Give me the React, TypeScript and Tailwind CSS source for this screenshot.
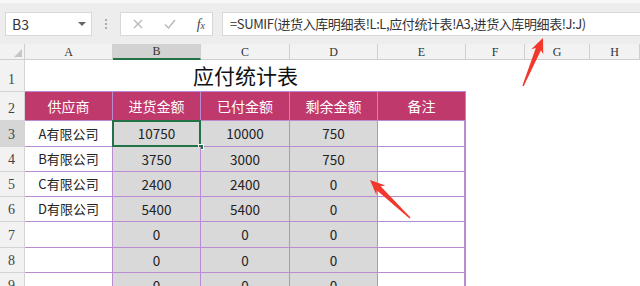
import React from "react";

const COLS = ["A", "B", "C", "D", "E", "F", "G", "H"];

const ROWS = [
  { name: "A有限公司", b: "10750", c: "10000", d: "750" },
  { name: "B有限公司", b: "3750", c: "3000", d: "750" },
  { name: "C有限公司", b: "2400", c: "2400", d: "0" },
  { name: "D有限公司", b: "5400", c: "5400", d: "0" },
  { name: "", b: "0", c: "0", d: "0" },
  { name: "", b: "0", c: "0", d: "0" },
  { name: "", b: "0", c: "0", d: "0" },
];

const ROW_H = ["h-[26px]", "h-[25px]", "h-[25px]", "h-[25px]", "h-[26px]", "h-[25px]", "h-[25px]"];

const cjk = { fontFamily: '"Noto Sans CJK SC", "Noto Sans", sans-serif' };
const serif = { fontFamily: '"Liberation Serif", "DejaVu Serif", serif' };

function Arrow({ x1, y1, x2, y2 }: { x1: number; y1: number; x2: number; y2: number }) {
  const dx = x2 - x1;
  const dy = y2 - y1;
  const L = Math.sqrt(dx * dx + dy * dy);
  const a = (Math.atan2(dy, dx) * 180) / Math.PI;
  const pts = [
    [0, -0.7],
    [L - 12, -2.8],
    [L - 15, -6.5],
    [L, 0],
    [L - 15, 6.5],
    [L - 12, 2.8],
    [0, 0.7],
  ]
    .map(p => p.join(","))
    .join(" ");
  return (
    <g transform={`translate(${x1} ${y1}) rotate(${a})`}>
      <polygon points={pts} fill="#f2382c" />
    </g>
  );
}

function RowHead({ n, active, h }: { n: number; active?: boolean; h: string }) {
  return (
    <div
      className={`${h} flex items-end pl-[8px] pb-[1px] text-[14px] text-[#444] border-b border-r border-[#d4d4d4] ${
        active ? "bg-[#d6d6d6]" : "bg-[#f2f2f2]"
      }`}
      style={serif}
    >
      {n}
    </div>
  );
}

export default function App() {
  return (
    <div className="relative w-[640px] h-[286px] overflow-hidden bg-white" style={cjk}>
      {/* formula bar */}
      <div className="h-[44px] bg-[#ededed] border-t-[3px] border-[#f7f7f7] flex items-start pt-[9px]">
        <div className="ml-[5px] w-[87px] h-[24px] bg-white border border-[#d8d8d8] flex items-center justify-between pl-[6px] pr-[5px]">
          <span className="text-[14px] text-[#333]">B3</span>
          <span className="w-0 h-0 border-l-[4px] border-r-[4px] border-t-[4px] border-l-transparent border-r-transparent border-t-[#666]" />
        </div>
        <div className="w-[28px] h-[24px] flex flex-col items-center justify-center gap-[2px]">
          <span className="w-[2px] h-[2px] bg-[#aaa]" />
          <span className="w-[2px] h-[2px] bg-[#aaa]" />
          <span className="w-[2px] h-[2px] bg-[#aaa]" />
        </div>
        <div className="w-[93px] h-[24px] bg-white border border-[#d8d8d8] flex items-center justify-between pl-[11px] pr-[7px]">
          <svg width="12" height="12" viewBox="0 0 12 12">
            <path d="M2 2 L10 10 M10 2 L2 10" stroke="#b5b5b5" strokeWidth="1.2" />
          </svg>
          <svg width="14" height="12" viewBox="0 0 14 12">
            <path d="M2 6.5 L5.5 10 L12 2" stroke="#b5b5b5" strokeWidth="1.3" fill="none" />
          </svg>
          <span className="text-[14px] italic text-[#444]" style={serif}>
            f<span className="text-[10px]">x</span>
          </span>
        </div>
        <div className="ml-[9px] flex-1 h-[24px] bg-white border border-[#d8d8d8] border-r-0 flex items-center pl-[7px] text-[13px] text-[#333] whitespace-nowrap tracking-[-0.4px]">
          =SUMIF(进货入库明细表!L:L,应付统计表!A3,进货入库明细表!J:J)
        </div>
      </div>

      {/* sheet */}
      <div className="grid grid-cols-[25px_88px_88px_89px_88px_88px_59px_65px_1fr]">
        {/* column headers */}
        <div className="h-[16px] bg-[#f2f2f2] border-b border-r border-[#cfcfcf] flex items-end justify-end pr-[2px] pb-[2px]">
          <svg width="8" height="8" viewBox="0 0 8 8">
            <path d="M8 0 L8 8 L0 8 Z" fill="#c6c6c6" />
          </svg>
        </div>
        {COLS.map(c => (
          <div
            key={c}
            className={`h-[16px] flex items-center justify-center text-[12px] text-[#333] border-r border-[#d0d0d0] ${
              c === "B" ? "bg-[#d2d2d2] border-b-2 border-b-[#217346]" : "bg-[#f2f2f2] border-b border-b-[#cfcfcf]"
            }`}
            style={serif}
          >
            {c}
          </div>
        ))}

        {/* row 1 title */}
        <RowHead n={1} h="h-[32px]" />
        <div className="col-span-5 h-[32px] bg-white border-b border-[#b98bd0] flex items-center justify-center text-[21px] text-[#111]">
          应付统计表
        </div>
        <div className="col-span-3 h-[32px] bg-white" />

        {/* row 2 header */}
        <RowHead n={2} h="h-[29px]" />
        {["供应商", "进货金额", "已付金额", "剩余金额", "备注"].map(t => (
          <div
            key={t}
            className="h-[29px] bg-[#c0396c] border-r border-b border-[#b98bd0] flex items-center justify-center text-[14px] text-white"
          >
            {t}
          </div>
        ))}
        <div className="col-span-3 h-[29px] bg-white" />

        {ROWS.map((r, i) => (
          <React.Fragment key={i}>
            <RowHead n={i + 3} h={ROW_H[i]} active={i === 0} />
            <div className={`${ROW_H[i]} bg-white border-r border-b border-[#b98bd0] flex items-center justify-center text-[13px] text-[#222]`}>
              {r.name}
            </div>
            <div className={`${ROW_H[i]} relative bg-[#d9d9d9] border-r border-b border-[#b98bd0] flex items-center justify-center text-[13.5px] text-[#222]`}>
              {i === 0 && (
                <>
                  <span className="absolute -left-[1px] -top-[1px] -right-[1px] -bottom-[1px] border-2 border-[#217346]" />
                  <span className="absolute -right-[4px] -bottom-[4px] w-[6px] h-[6px] bg-[#217346] border border-white" />
                </>
              )}
              {r.b}
            </div>
            <div className={`${ROW_H[i]} bg-[#d9d9d9] border-r border-b border-[#b98bd0] flex items-center justify-center text-[13.5px] text-[#222]`}>
              {r.c}
            </div>
            <div className={`${ROW_H[i]} bg-[#d9d9d9] border-r border-b border-[#b98bd0] flex items-center justify-center text-[13.5px] text-[#222]`}>
              {r.d}
            </div>
            <div className={`${ROW_H[i]} bg-white border-r-2 border-b border-[#b98bd0]`} />
            <div className={`${ROW_H[i]} col-span-3 bg-white`} />
          </React.Fragment>
        ))}
      </div>

      {/* annotation arrows */}
      <svg className="absolute left-0 top-0 pointer-events-none" width="640" height="286">
        <Arrow x1={523} y1={86} x2={543} y2={38} />
        <Arrow x1={410} y1={218} x2={370} y2={180} />
      </svg>
    </div>
  );
}
